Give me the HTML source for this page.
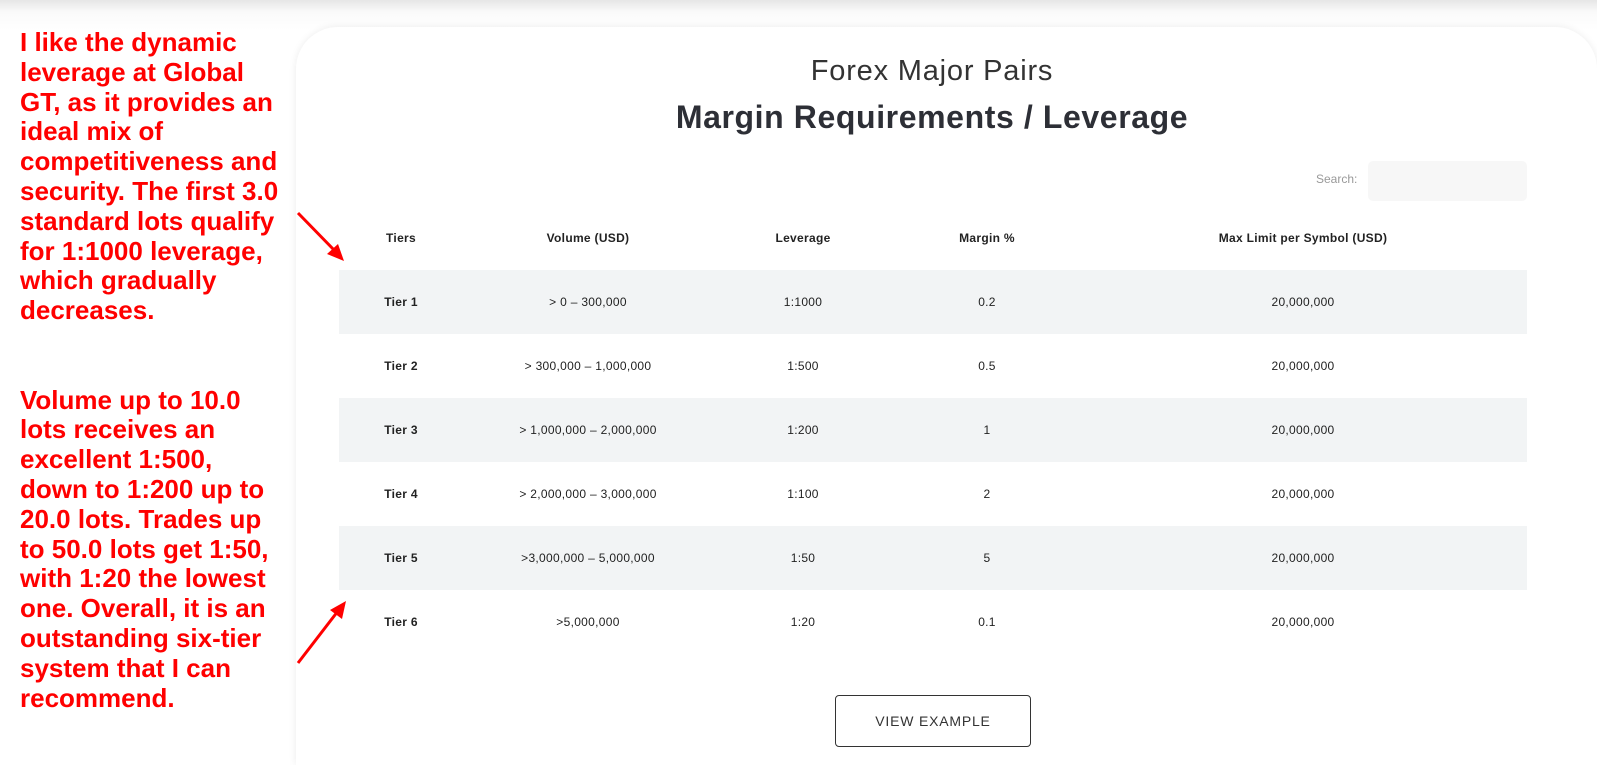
<!DOCTYPE html>
<html style="height:765px;overflow:hidden"><head><meta charset="utf-8"><style>
body{margin:0;width:1597px;height:765px;overflow:hidden;background:#fff;font-family:"Liberation Sans",sans-serif;position:relative}
.top{position:absolute;left:0;top:0;width:1597px;height:30px;background:linear-gradient(#e6e6e6,#fafafa 40%,#fff)}
.card{position:absolute;left:296px;top:27px;width:1301px;height:738px;background:#fff;border-radius:42px 42px 0 0;box-shadow:0 0 8px rgba(0,0,0,.08)}
.left{position:absolute;left:20px;top:28px;white-space:nowrap;color:#f00;font-weight:bold;font-size:26px;line-height:29.8px}
h1{position:absolute;left:296px;width:1272px;text-align:center;margin:0;font-weight:normal;color:#333;font-size:29px;letter-spacing:.8px;top:55px}
h2{position:absolute;left:296px;width:1272px;text-align:center;margin:0;font-weight:bold;color:#2d2f36;font-size:32px;letter-spacing:.6px;top:99px}
.search{position:absolute;left:1316px;top:172px;font-size:12px;color:#999}
.sbox{position:absolute;left:1368px;top:161px;width:159px;height:40px;background:#f7f7f7;border-radius:5px}
.row{position:absolute;left:339px;width:1188px;height:64px;font-size:12px;color:#222;letter-spacing:.3px}
.row span{position:absolute;top:0;line-height:64px;transform:translateX(-50%);white-space:nowrap}
.g{background:#f2f4f5}
.h span,.row span.b{font-weight:bold}
.btn{position:absolute;left:835px;top:695px;width:194px;height:50px;border:1px solid #333;border-radius:4px;text-align:center;line-height:50px;font-size:14px;letter-spacing:.8px;color:#333}
</style></head><body>
<div class="top"></div>
<div class="card"></div>
<div class="left">I like the dynamic<br>leverage at Global<br>GT, as it provides an<br>ideal mix of<br>competitiveness and<br>security. The first 3.0<br>standard lots qualify<br>for 1:1000 leverage,<br>which gradually<br>decreases.<br><br><br>Volume up to 10.0<br>lots receives an<br>excellent 1:500,<br>down to 1:200 up to<br>20.0 lots. Trades up<br>to 50.0 lots get 1:50,<br>with 1:20 the lowest<br>one. Overall, it is an<br>outstanding six-tier<br>system that I can<br>recommend.</div>
<svg style="position:absolute;left:0;top:0" width="400" height="765">
<line x1="298" y1="213" x2="336" y2="252" stroke="#f00" stroke-width="3"/><polygon points="344,261 327,254 338,244" fill="#f00"/>
<line x1="298" y1="663" x2="338" y2="611" stroke="#f00" stroke-width="3"/><polygon points="346,601 342,619 330,610" fill="#f00"/>
</svg>
<h1>Forex Major Pairs</h1>
<h2>Margin Requirements / Leverage</h2>
<div class="search">Search:</div><div class="sbox"></div>
<div class="row h" style="top:206px"><span style="left:62px">Tiers</span><span style="left:249px">Volume (USD)</span><span style="left:464px">Leverage</span><span style="left:648px">Margin %</span><span style="left:964px">Max Limit per Symbol (USD)</span></div>
<div class="row g" style="top:270px"><span class="b" style="left:62px">Tier 1</span><span style="left:249px">&gt; 0 – 300,000</span><span style="left:464px">1:1000</span><span style="left:648px">0.2</span><span style="left:964px">20,000,000</span></div>
<div class="row" style="top:334px"><span class="b" style="left:62px">Tier 2</span><span style="left:249px">&gt; 300,000 – 1,000,000</span><span style="left:464px">1:500</span><span style="left:648px">0.5</span><span style="left:964px">20,000,000</span></div>
<div class="row g" style="top:398px"><span class="b" style="left:62px">Tier 3</span><span style="left:249px">&gt; 1,000,000 – 2,000,000</span><span style="left:464px">1:200</span><span style="left:648px">1</span><span style="left:964px">20,000,000</span></div>
<div class="row" style="top:462px"><span class="b" style="left:62px">Tier 4</span><span style="left:249px">&gt; 2,000,000 – 3,000,000</span><span style="left:464px">1:100</span><span style="left:648px">2</span><span style="left:964px">20,000,000</span></div>
<div class="row g" style="top:526px"><span class="b" style="left:62px">Tier 5</span><span style="left:249px">&gt;3,000,000 – 5,000,000</span><span style="left:464px">1:50</span><span style="left:648px">5</span><span style="left:964px">20,000,000</span></div>
<div class="row" style="top:590px"><span class="b" style="left:62px">Tier 6</span><span style="left:249px">&gt;5,000,000</span><span style="left:464px">1:20</span><span style="left:648px">0.1</span><span style="left:964px">20,000,000</span></div>
<div class="btn">VIEW EXAMPLE</div>
</body></html>
